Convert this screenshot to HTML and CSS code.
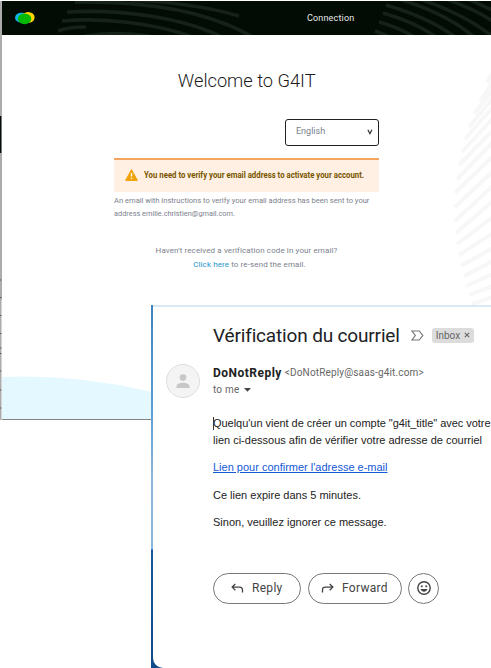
FILE: index.html
```html
<!DOCTYPE html>
<html lang="en">
<head>
<meta charset="utf-8">
<title>Welcome to G4IT</title>
<link rel="stylesheet" href="styles.css">
</head>
<body>
<div class="desktop">
  <section class="browser">
    <svg class="edge" width="2" height="420" viewBox="0 0 2 420">
      <path fill="#acacac" d="M0 1h2v419H1.500V300H0z"/><path fill="#acacac" d="M0 300h1v120H0z"/>
      <path fill="#050b07" d="M0 116h1.300v37H0z"/>
      <path stroke="#555" d="M0 280h1.300M0 297.500h1.300M0 315.500h1.300M0 333.500h1.300M0 348h1.300M0 353.500h1.300M0 371h1.300M0 390h1.300M0 408h1.300"/>
    </svg>
    <div class="page">
      <header class="topbar">
        <svg class="waves" width="489" height="34" viewBox="2 1 489 34" fill="none" stroke="#152119" stroke-width="3.600">
          <path d="M67 12C120 9 180 17 220 36M62 21C105 17 155 24 190 36M58 31Q68 27 86 27M75 2C140 1 205 10 251 36M130 0C175 2 212 8 239 16M85 36Q115 31 150 36"/>
          <path d="M386 5Q430 18 455 37M383 13Q415 22 436 37M379 22Q400 28 414 37M375 31L390 37M392 -3Q445 12 474 37M417 -2Q465 14 493 37M443 -2Q475 9 494 22M466 -2L494 11"/>
        </svg>
        <svg class="logo" width="20" height="13" viewBox="0 0 20 13">
          <ellipse cx="6.500" cy="5.800" rx="6.500" ry="5" fill="#12b5ea"/><ellipse cx="13.200" cy="5.400" rx="6.400" ry="5.400" fill="#ffd500"/><ellipse cx="9.600" cy="6.800" rx="6.700" ry="5.400" fill="#00b900"/>
        </svg>
        <span class="t nav">Connection</span>
      </header>
      <svg class="stripes" width="40" height="270" viewBox="451 36 40 270" fill="none" stroke="#f7f7f7" stroke-width="4">
        <path d="M487 83L493 72M480 101L493 82M474 114L493 90M469 127L493 98M465 139L493 107M462 152L493 118M459 165L493 130M457 179L493 142M455 193L493 156M455 207L493 171M455 221L493 186M456 233L493 201M457 244L493 217M459 255L493 233M461 266L493 248M464 276L493 261M466 286L493 274M469 295L493 286M472 304L493 297"/>
      </svg>
      <svg class="hill" width="150" height="43" viewBox="0 0 150 43"><path fill="#e4f8ff" d="M0 1Q75-2 150 16V43H0z"/></svg>
      <main class="card">
        <h1><span class="t welcome">Welcome to G4IT</span></h1>
        <div class="lang"><span class="t english">English</span><svg width="6" height="6" viewBox="0 0 6 6"><path d="M.9.700L2.900 4.700 4.900.700" fill="none" stroke="#333" stroke-width="1.200"/></svg></div>
        <div class="alert">
          <svg width="13" height="12" viewBox="0 0 13 12"><path d="M6.500.600L12.400 11.400H.6z" fill="#f0a30a" stroke="#f0a30a" stroke-linejoin="round"/><path d="M6.500 4v3.600M6.500 8.700v1.400" stroke="#fff" stroke-width="1.400"/></svg>
          <span class="t warn">You need to verify your email address to activate your account.</span>
        </div>
        <p class="info"><span class="t info1">An email with instructions to verify your email address has been sent to your</span><span class="t info2">address emilie.christien@gmail.com.</span></p>
        <p class="resend"><span class="t re1">Haven't received a verification code in your email?</span><span class="t re2"><a>Click here</a> to re-send the email.</span></p>
      </main>
    </div>
  </section>
  <div class="frame">
  <section class="mail">
    <div class="subject">
      <span class="t title">Vérification du courriel</span>
      <svg class="marker" width="13" height="11" viewBox="0 0 13 11"><path d="M1 1H8.300L11.800 5.500 8.300 10H1L4.300 5.500z" fill="none" stroke="#777" stroke-width="1.200"/></svg>
      <span class="chip"><span class="t inbox">Inbox</span><svg width="6" height="6" viewBox="0 0 6 6"><path d="M.8.800l4.400 4.400M5.200.800L.8 5.200" stroke="#666" stroke-width="1.100"/></svg></span>
    </div>
    <div class="sender">
      <svg class="avatar" width="34" height="34" viewBox="0 0 34 34"><circle cx="17" cy="17" r="16.500" fill="#f4f4f4" stroke="#dedede"/><circle cx="17" cy="13.600" r="3.300" fill="#c7c7c7"/><path d="M10.500 24v-1.500c0-5 13-5 13 0V24z" fill="#c7c7c7"/></svg>
      <div class="who">
        <div class="from"><b class="t name">DoNotReply</b><span class="t addr">&lt;DoNotReply@saas-g4it.com&gt;</span></div>
        <div class="to"><span class="t tome">to me</span><svg width="7" height="4" viewBox="0 0 7 4"><path d="M0 0h7L3.500 3.700z" fill="#444"/></svg></div>
      </div>
    </div>
    <div class="message">
      <p class="lines"><span class="t b1">Quelqu'un vient de créer un compte "g4it_title" avec votre</span><span class="t b2">lien ci-dessous afin de vérifier votre adresse de courriel</span></p>
      <p><a class="t b3">Lien pour confirmer l'adresse e-mail</a></p>
      <p><span class="t b4">Ce lien expire dans 5 minutes.</span></p>
      <p><span class="t b5">Sinon, veuillez ignorer ce message.</span></p>
    </div>
    <div class="actions">
      <span class="pill reply"><svg width="13" height="11" viewBox="0 0 13 11"><path d="M4.300 1L1.200 4.100l3.100 3.100M1.200 4.100H8.500Q11.500 4.100 11.500 7V9.500" fill="none" stroke="#444" stroke-width="1.300"/></svg><span class="t rp">Reply</span></span>
      <span class="pill forward"><svg width="13" height="11" viewBox="0 0 13 11"><path d="M8.700 1l3.100 3.100-3.100 3.100M11.800 4.100H4.500Q1.500 4.100 1.500 7V9.500" fill="none" stroke="#444" stroke-width="1.300"/></svg><span class="t fw">Forward</span></span>
      <span class="pill emoji"><svg width="14" height="14" viewBox="0 0 14 14"><circle cx="7" cy="7" r="6.200" fill="none" stroke="#444" stroke-width="1.400"/><circle cx="4.800" cy="5.200" r="1" fill="#444"/><circle cx="9.200" cy="5.200" r="1" fill="#444"/><path d="M3.500 8h7c-1.200 3.500-5.800 3.500-7 0z" fill="#444"/></svg></span>
    </div>
  </section>
  </div>
</div>
</body>
</html>
```
FILE: styles.css
```css
* { box-sizing: border-box; }
body { margin: 0; background: #fff; font-family: Roboto, "Liberation Sans", sans-serif; }
h1, p { margin: 0; font-weight: 400; }
svg { display: block; flex: none; }
.t { display: inline-block; white-space: nowrap; }
.desktop { position: relative; width: 491px; height: 668px; overflow: hidden; }
.browser { display: flex; height: 420px; }
.page { position: relative; flex: 1; margin-top: 1px; border-bottom: 1px solid #858585; overflow: hidden; }
.topbar { position: relative; height: 34px; background: #020c04; display: flex; align-items: center; padding-left: 13px; }
.waves { position: absolute; left: 0; top: 0; }
.logo { position: relative; }
.nav { position: relative; margin-left: 272px; margin-top: -1px; font-size: 9px; letter-spacing: 0.17px; color: #e8e8e8; }
.stripes { position: absolute; right: 0; top: 35px; }
.hill { position: absolute; left: 0; bottom: 0; }
.card { position: relative; width: 265px; margin-left: 112px; padding-top: 33px; }
h1 { height: 51px; line-height: 26px; text-align: center; font-size: 19px; color: #1b1b1b; }
.welcome { font-weight: 300; transform: scaleX(0.96); }
.lang { display: flex; align-items: center; justify-content: space-between; width: 94px; height: 27px; margin-left: auto; padding: 0 5px 3px 10px; border: 1px solid #222; border-radius: 3px; font-size: 9px; color: #777f8c; }
.lang svg { margin-top: 2px; }
.alert { display: flex; align-items: center; gap: 6px; height: 34px; margin-top: 12px; padding: 0 0 2px 11px; border-top: 2px solid #f4a661; background: #fff0e3; font-size: 8.500px; font-weight: 700; color: #795600; }
.warn { transform: scaleX(0.918); transform-origin: left; }
.info { display: flex; flex-direction: column; align-items: flex-start; padding-top: 3px; font-size: 8px; line-height: 12.500px; color: #7c828e; }
.info1 { transform: scaleX(0.946); transform-origin: left; }
.info2 { transform: scaleX(0.92); transform-origin: left; }
.resend { display: flex; flex-direction: column; align-items: center; margin-top: 24px; font-size: 8px; line-height: 14px; letter-spacing: 0.11px; color: #7c828e; }
.re2 { margin-left: 6px; }
.resend a { color: #2595cc; }

.frame { position: absolute; left: 151px; top: 305px; width: 340px; height: 363px; padding-left: 2px; background: linear-gradient(#3f82be 0, #5f9fd2 110px, #90b8dc 180px, #86b4dc 244px, #17589a 245px, #104a8a 100%); }
.mail { height: 363px; padding: 15px 0 0 60px; border-top: 2px solid #d9e8f5; border-bottom-left-radius: 10px; background: #fff; }
.subject { display: flex; align-items: center; height: 26px; }
.title { font-size: 19px; letter-spacing: -0.16px; color: #202124; }
.marker { margin-left: 11px; }
.chip { display: flex; align-items: center; gap: 4px; width: 42px; height: 15px; margin-left: 8px; padding-left: 4px; border-radius: 3px; background: #dcdcdc; font-size: 10px; color: #666; }
.sender { display: flex; gap: 13px; margin: 16px 0 0 -47px; }
.from { display: flex; align-items: center; gap: 3px; height: 17px; }
.name { font-size: 12px; letter-spacing: 0.48px; color: #222; }
.addr { font-size: 10px; letter-spacing: 0.15px; color: #666; }
.to { display: flex; align-items: center; gap: 5px; height: 17px; font-size: 10px; letter-spacing: 0.2px; color: #666; }
.message { display: flex; flex-direction: column; gap: 10.300px; margin-top: 17px; font: 11px/17px "Liberation Sans", sans-serif; color: #222; }
.lines { position: relative; display: flex; flex-direction: column; align-items: flex-start; }
.lines::before { content: ""; position: absolute; left: 0; top: 2px; width: 1px; height: 13px; background: #333; }
.b1 { letter-spacing: -0.035px; }
.message a { color: #1558d6; text-decoration: underline; }
.actions { display: flex; gap: 7px; margin-top: 42px; }
.pill { display: flex; align-items: center; height: 31px; padding-left: 17px; gap: 8px; border: 1px solid #777; border-radius: 16px; font-size: 12px; letter-spacing: 0.3px; color: #444; }
.reply { width: 88px; }
.forward { width: 94px; padding-left: 12px; }
.emoji { width: 31px; margin-left: -1px; padding: 0; justify-content: center; }
```
